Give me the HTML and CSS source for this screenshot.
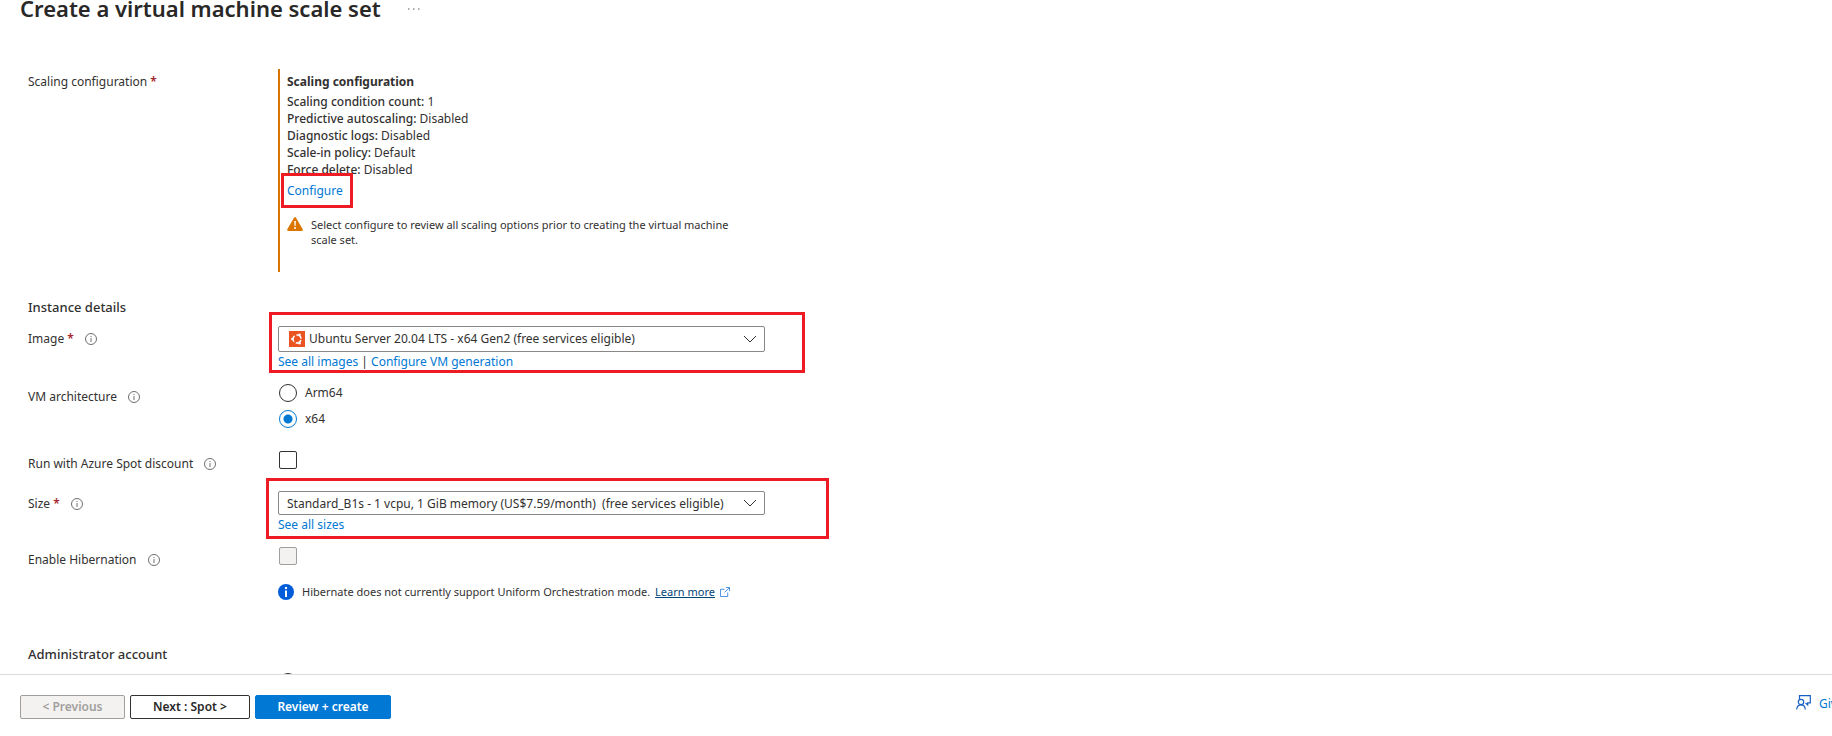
FILE: index.html
```html
<!DOCTYPE html>
<html lang="en">
<head>
<meta charset="utf-8">
<title>Create a virtual machine scale set</title>
<link rel="stylesheet" href="styles.css">
</head>
<body>
<svg class="sprite" aria-hidden="true">
  <symbol id="info" viewBox="0 0 12 12"><circle cx="6" cy="6" r="5.5" fill="none" stroke="currentColor" stroke-width="0.9"/><path d="M6 5v4M6 3v1.100" stroke="currentColor" stroke-width="0.9"/></symbol>
  <symbol id="chevron" viewBox="0 0 14 8"><path d="M1 1l6 6 6-6" fill="none" stroke="currentColor" stroke-width="1"/></symbol>
</svg>
<header class="page-header">
  <h1 class="page-title">Create a virtual machine scale set</h1>
  <button class="more" type="button" aria-label="More actions"><svg width="12" height="2" viewBox="0 0 12 2"><path d="M0 1h1.500M5 1h1.500M10 1h1.500" stroke="currentColor" stroke-width="1.200"/></svg></button>
</header>
<main class="form">
  <section class="row">
    <div class="label">Scaling configuration <span class="req">*</span></div>
    <div class="summary">
      <h2 class="summary-title">Scaling configuration</h2>
      <ul class="summary-list">
        <li><b>Scaling condition count:</b> 1</li>
        <li><b>Predictive autoscaling:</b> Disabled</li>
        <li><b>Diagnostic logs:</b> Disabled</li>
        <li><b>Scale-in policy:</b> Default</li>
        <li><b>Force delete:</b> Disabled</li>
      </ul>
      <div class="configure marked"><a href="#configure">Configure</a><span class="mark mark-link"></span></div>
      <div class="warning">
        <svg width="16" height="14" viewBox="0 0 16 14"><path d="M7 .8Q8-.6 9 .8l6.700 11.400Q16.200 14 14.500 14h-13Q-.2 14 .3 12.200z" fill="#db7500"/><path d="M7.200 4h1.700l-.3 5H7.500z" fill="#fff"/><circle cx="8" cy="11" r="1" fill="#fff"/></svg>
        <p>Select configure to review all scaling options prior to creating the virtual machine scale set.</p>
      </div>
    </div>
  </section>

  <h2 class="section-title">Instance details</h2>

  <div class="row row-image">
    <label class="label" for="image">Image <span class="req">*</span><svg class="info"><use href="#info"/></svg></label>
    <div class="control marked">
      <div class="select with-logo">
        <svg class="logo" viewBox="0 0 16 16"><path d="M0 0h16v16H0z" fill="#e95420"/><circle cx="8" cy="8" r="4" fill="none" stroke="#fff" stroke-width="1.500" stroke-dasharray="6.400 1.978" stroke-dashoffset="-1"/><circle cx="3.300" cy="8" r="1.200" fill="#fff"/><circle cx="10.600" cy="3.800" r="1.200" fill="#fff"/><circle cx="10.600" cy="12.200" r="1.200" fill="#fff"/></svg>
        <select id="image"><option>Ubuntu Server 20.04 LTS - x64 Gen2 (free services eligible)</option></select>
        <svg class="chevron"><use href="#chevron"/></svg>
      </div>
      <div class="links"><a href="#images">See all images</a> | <a href="#generation">Configure VM generation</a></div>
      <span class="mark mark-image"></span>
    </div>
  </div>

  <div class="row row-arch" role="radiogroup" aria-labelledby="arch">
    <div class="label" id="arch">VM architecture<svg class="info"><use href="#info"/></svg></div>
    <div class="control radios">
      <label class="choice"><input type="radio" name="arch">Arm64</label>
      <label class="choice"><input type="radio" name="arch" checked>x64</label>
    </div>
  </div>

  <div class="row row-spot">
    <label class="label" for="spot">Run with Azure Spot discount<svg class="info"><use href="#info"/></svg></label>
    <div class="control"><input type="checkbox" id="spot"></div>
  </div>

  <div class="row row-size">
    <label class="label" for="size">Size <span class="req">*</span><svg class="info"><use href="#info"/></svg></label>
    <div class="control marked">
      <div class="select select-size">
        <select id="size"><option>Standard_B1s - 1 vcpu, 1 GiB memory (US$7.59/month)&nbsp; (free services eligible)</option></select>
        <svg class="chevron"><use href="#chevron"/></svg>
      </div>
      <div class="links"><a href="#sizes">See all sizes</a></div>
      <span class="mark mark-size"></span>
    </div>
  </div>

  <div class="row row-hibernate">
    <label class="label" for="hibernate">Enable Hibernation<svg class="info"><use href="#info"/></svg></label>
    <div class="control"><input type="checkbox" id="hibernate" disabled></div>
  </div>
  <div class="row row-note">
    <div class="note">
      <svg width="16" height="16" viewBox="0 0 16 16"><circle cx="8" cy="8" r="8" fill="#015cda"/><circle cx="8" cy="4" r="1.200" fill="#fff"/><path d="M7 6.500h2V13H7z" fill="#fff"/></svg>
      <p>Hibernate does not currently support Uniform Orchestration mode.</p>
      <a href="#learn">Learn more</a>
      <svg width="10" height="10" viewBox="0 0 11 11" fill="none" stroke="#3b8ae6"><path d="M5 2.500H.5v8h8V6M6.500.5h4v4M10.500.5L5 6"/></svg>
    </div>
  </div>

  <h2 class="section-title section-admin">Administrator account</h2>
  <div class="row row-auth"><div class="control"><input type="radio" name="auth" aria-label="SSH public key"></div></div>
</main>
<footer class="footer">
  <button class="button" type="button" disabled>&lt; Previous</button>
  <button class="button button-next" type="button">Next : Spot &gt;</button>
  <button class="button button-primary" type="button">Review + create</button>
  <a class="feedback" href="#feedback"><svg width="15" height="15" viewBox="0 0 15 15" fill="none" stroke="#1860c4" stroke-width="1.200"><path d="M3.500 4V.7h10.800v7.200h-2.600v2L9.500 8"/><circle cx="5" cy="7" r="2.700"/><path d="M.7 14.500c.2-3 2-4.700 4.300-4.700s4.100 1.700 4.300 4.700"/></svg><span>Give feedback</span></a>
</footer>
</body>
</html>
```
FILE: styles.css
```css
* { box-sizing: border-box; }

body {
  margin: 0;
  height: 100vh;
  display: flex;
  flex-direction: column;
  overflow: hidden;
  background: #fff;
  color: #323130;
  font-family: "Noto Sans", "Open Sans", sans-serif;
  font-size: 12px;
  line-height: 17px;
}

h1, h2, p, ul { margin: 0; padding: 0; }
ul { list-style: none; }
a { color: #0078d4; text-decoration: none; }
svg { flex: none; }
.sprite { position: absolute; width: 0; height: 0; }

.page-header {
  flex: none;
  display: flex;
  align-items: center;
  gap: 27px;
  padding-left: 20px;
}
.page-title { font-size: 22px; line-height: 16px; font-weight: 600; color: #292827; }
.more { display: flex; padding: 2px 0 0; border: 0; background: none; color: #605e5c; }

.form { flex: 1; min-height: 0; overflow: hidden; padding: 53px 28px 0; }
.row { display: grid; grid-template-columns: 250px minmax(0, 1fr); }
.label { display: flex; align-items: center; align-self: start; line-height: 25px; white-space: pre; }
.req { color: #a4262c; font-weight: 600; }
.info { width: 12px; height: 12px; margin-left: 11px; color: #605e5c; }
.control { max-width: 487px; }

.summary { max-width: 487px; padding: 4px 0 24px 7px; border-left: 2px solid #db7500; }
.summary-title { font-size: 12px; line-height: 17px; font-weight: 700; margin-bottom: 3px; }
.summary-list b { font-weight: 500; }
.configure { width: max-content; margin-top: 4px; }
.warning { display: flex; gap: 8px; margin-top: 18px; padding-right: 32px; padding-bottom: 1px; font-size: 11px; line-height: 15px; }

.section-title { margin-top: 25px; font-size: 13px; line-height: 20px; font-weight: 500; }
.section-admin { margin-top: 44px; }
.row-image { margin-top: 9px; }
.row-arch { margin-top: 13px; }
.row-spot { margin-top: 23px; }
.row-size { margin-top: 15px; }
.row-hibernate { margin-top: 13px; }
.row-note { margin-top: 12px; }
.row-auth { margin-top: 9px; }
.row-note .note, .row-auth .control { grid-column: 2; }

.select { display: grid; height: 26px; align-items: center; }
.select-size { height: 24px; }
.select > * { grid-row: 1; grid-column: 1; }
.select select {
  appearance: none;
  width: 100%;
  height: 100%;
  padding: 0 30px 0 8px;
  border: 1px solid #8a8886;
  border-radius: 2px;
  background: #fff;
  color: #323130;
  font: inherit;
}
.select.with-logo select { padding-left: 30px; padding-bottom: 2px; }
.logo { z-index: 1; width: 16px; height: 16px; margin-left: 11px; }
.chevron { z-index: 1; width: 14px; height: 8px; justify-self: end; margin-right: 8px; pointer-events: none; }
.links { line-height: 19px; }

.radios { display: grid; gap: 8px; }
.choice { display: flex; align-items: center; gap: 8px; line-height: 18px; }
input {
  appearance: none;
  display: block;
  flex: none;
  width: 18px;
  height: 18px;
  margin: 0 0 0 1px;
  border: 1px solid #323130;
  border-radius: 2px;
  background: #fff;
}
input[type="radio"] { border-radius: 50%; }
input[type="radio"]:checked { border-color: #0078d4; background: radial-gradient(circle, #0078d4 4px, #fff 5px); }
input:disabled { border-color: #a19f9d; background: #f3f2f1; }

.note { display: flex; align-items: center; font-size: 11px; line-height: 16px; }
.note p { margin-left: 8px; }
.note a { margin: 0 5px; color: #004578; text-decoration: underline; }

/* Highlight frames laid over the form */
.marked { position: relative; }
.mark { position: absolute; border: 3px solid #ed1c24; pointer-events: none; }
.mark-link { inset: -9px -10px -9px -6px; }
.mark-image { inset: -14px -40px -2px -9px; }
.mark-size { inset: -13px -64px -5px -12px; }

.footer {
  flex: none;
  display: flex;
  align-items: flex-start;
  gap: 5px;
  padding: 20px 0 17px 20px;
  border-top: 1px solid #dcdbda;
}
.button {
  height: 24px;
  min-width: 105px;
  padding: 0 0 2px;
  border: 1px solid #323130;
  border-radius: 2px;
  background: #fff;
  color: #292827;
  font: inherit;
  font-weight: 600;
}
.button:disabled { border-color: #a19f9d; background: #f3f2f1; color: #a19f9d; }
.button-next { min-width: 120px; }
.button-primary { min-width: 136px; border-color: #0078d4; background: #0078d4; color: #fff; }
.feedback { display: flex; align-items: flex-start; gap: 8px; width: 36px; margin-left: auto; overflow: hidden; white-space: nowrap; }
```
